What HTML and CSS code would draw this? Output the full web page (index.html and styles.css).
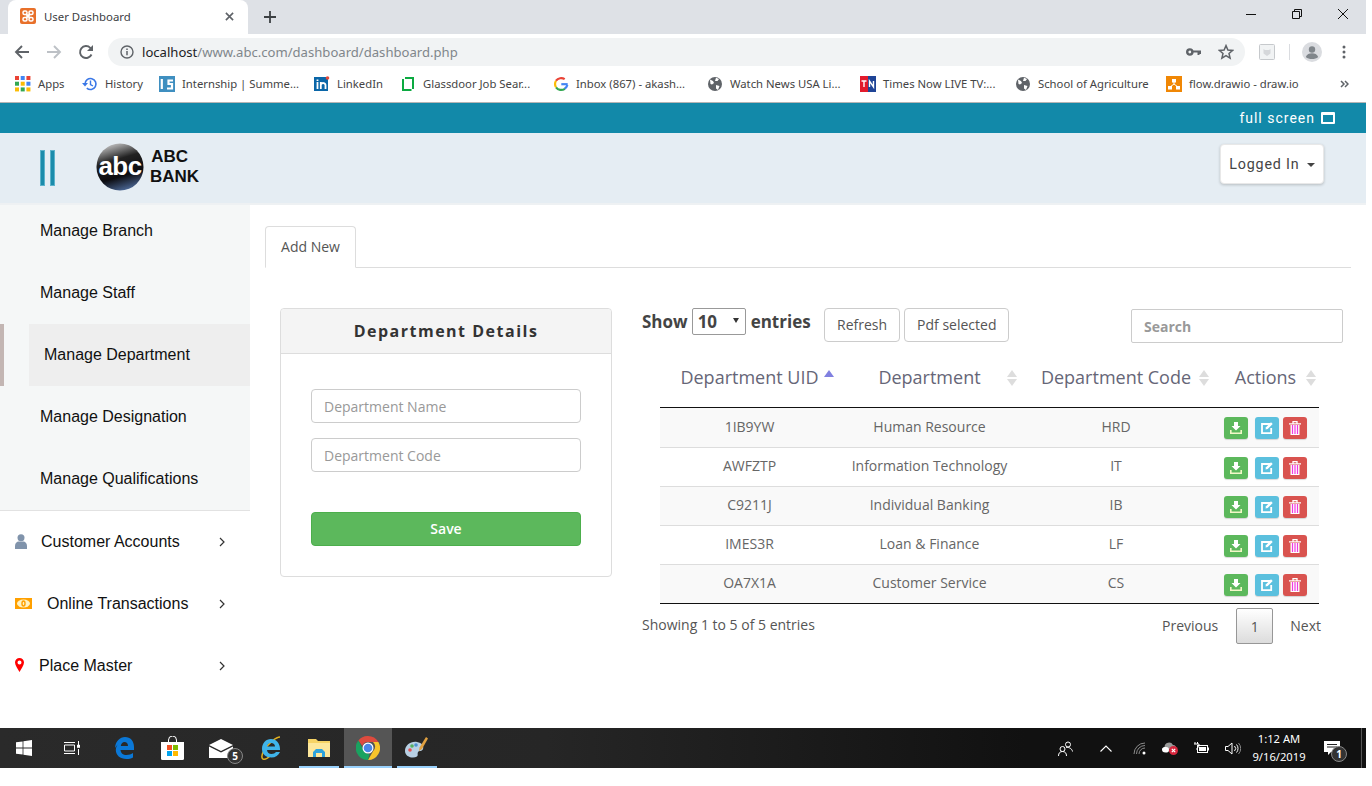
FILE: index.html
```html
<!DOCTYPE html>
<html lang="en">
<head>
    <meta charset="UTF-8">
    <meta name="viewport" content="width=device-width, initial-scale=1.0">
    <title>User Dashboard</title>
    <link rel="stylesheet" href="styles.css">
</head>
<body>
<div class="screen">

    <!-- browser chrome -->
    <div class="tabstrip">
        <div class="tab">
            <svg class="favicon" viewBox="0 0 16 16"><rect width="16" height="16" rx="2" fill="#e8702a"/><path d="M6 6l4 4M10 6l-4 4" stroke="#fff" stroke-width="2"/><rect x="3" y="3" width="4" height="3.500" rx="1.500" fill="none" stroke="#fff" stroke-width="1.500"/><rect x="9" y="3" width="4" height="3.500" rx="1.500" fill="none" stroke="#fff" stroke-width="1.500"/><rect x="3" y="9.500" width="4" height="3.500" rx="1.500" fill="none" stroke="#fff" stroke-width="1.500"/><rect x="9" y="9.500" width="4" height="3.500" rx="1.500" fill="none" stroke="#fff" stroke-width="1.500"/></svg>
            <span class="tab-title">User Dashboard</span>
            <svg class="tab-close" viewBox="0 0 10 10"><path d="M1 1l8 8M9 1l-8 8" stroke="#5f6368" stroke-width="1.800"/></svg>
        </div>
        <svg class="tab-new" viewBox="0 0 12 12"><path d="M6 0v12M0 6h12" stroke="#3c4043" stroke-width="1.800"/></svg>
        <div class="win-controls">
            <svg viewBox="0 0 12 12"><path d="M1 6.500h10" stroke="#111" stroke-width="1"/></svg>
            <svg viewBox="0 0 12 12"><path d="M1.500 3.500h7v7h-7zM3.500 3.500v-2h7v7h-2" fill="none" stroke="#111" stroke-width="1"/></svg>
            <svg viewBox="0 0 12 12"><path d="M1 1l10 10M11 1L1 11" stroke="#111" stroke-width="1"/></svg>
        </div>
    </div>
    <div class="toolbar">
        <svg class="nav-icon" viewBox="0 0 16 16"><path d="M15 8H2M8 2L2 8l6 6" fill="none" stroke="#5f6368" stroke-width="1.900"/></svg>
        <svg class="nav-icon" viewBox="0 0 16 16"><path d="M1 8h13M8 2l6 6-6 6" fill="none" stroke="#bdc1c6" stroke-width="1.900"/></svg>
        <svg class="nav-icon" viewBox="0 0 16 16"><path d="M13.500 10.500A6 6 0 1 1 12.300 3.800L14 5.500" fill="none" stroke="#5f6368" stroke-width="1.900"/><path d="M15 1v6H9z" fill="#5f6368"/></svg>
        <div class="omnibox">
            <svg class="info-icon" viewBox="0 0 14 14"><circle cx="7" cy="7" r="6" fill="none" stroke="#5f6368" stroke-width="1.400"/><path d="M7 6v4.200M7 3.400v1.500" stroke="#5f6368" stroke-width="1.500"/></svg>
            <span class="url"><span class="url-host">localhost</span>/www.abc.com/dashboard/dashboard.php</span>
            <svg class="key-icon" viewBox="0 0 15 8"><circle cx="3.800" cy="4" r="2.600" fill="none" stroke="#5f6368" stroke-width="2.400"/><path d="M6 3.500h9v1.500M12.500 3.500V7M14.300 3.500V6" fill="none" stroke="#5f6368" stroke-width="2"/></svg>
            <svg class="star-icon" viewBox="0 0 16 16"><path d="M8 1.600l1.900 4.400 4.700.4-3.600 3.100 1.100 4.600L8 11.700l-4.100 2.400L5 9.500 1.400 6.400l4.700-.4z" fill="none" stroke="#5f6368" stroke-width="1.500"/></svg>
        </div>
        <svg class="ext-icon" viewBox="0 0 16 16"><rect x=".5" y=".5" width="15" height="15" rx="1" fill="#f1f3f4" stroke="#c6c9cc"/><path d="M4.500 5l1.500 1h4l1.500-1v4.500L8 12 4.500 9.500z" fill="#d5d7da"/></svg>
        <span class="toolbar-sep"></span>
        <svg class="avatar" viewBox="0 0 20 20"><circle cx="10" cy="10" r="10" fill="#dadce0"/><circle cx="10" cy="7.500" r="3.200" fill="#80868b"/><path d="M3.800 15c1-3 3.500-3.800 6.200-3.800s5.200.8 6.200 3.800c-3 2.800-9.400 2.800-12.400 0z" fill="#80868b"/></svg>
        <svg class="menu-dots" viewBox="0 0 4 14"><circle cx="2" cy="2" r="1.500" fill="#5f6368"/><circle cx="2" cy="7" r="1.500" fill="#5f6368"/><circle cx="2" cy="12" r="1.500" fill="#5f6368"/></svg>
    </div>
    <div class="bookmarks">
        <div class="bm">
            <svg class="bm-icon" viewBox="0 0 14 14"><rect width="3.500" height="3.500" fill="#ea4335"/><rect x="5" width="3.500" height="3.500" fill="#4285f4"/><rect x="10" width="3.500" height="3.500" fill="#ea4335"/><rect y="5" width="3.500" height="3.500" fill="#34a853"/><rect x="5" y="5" width="3.500" height="3.500" fill="#fbbc05"/><rect x="10" y="5" width="3.500" height="3.500" fill="#4285f4"/><rect y="10" width="3.500" height="3.500" fill="#fbbc05"/><rect x="5" y="10" width="3.500" height="3.500" fill="#34a853"/><rect x="10" y="10" width="3.500" height="3.500" fill="#fbbc05"/></svg>
            <span>Apps</span>
        </div>
        <div class="bm">
            <svg class="bm-icon" viewBox="0 0 16 16"><path d="M3 8a5.500 5.500 0 1 1 1.800 4.100" fill="none" stroke="#3b78e7" stroke-width="1.600"/><path d="M0 7h6L3 10.500z" fill="#3b78e7"/><path d="M8.500 4.500v4l2.500 1.500" fill="none" stroke="#3b78e7" stroke-width="1.400"/></svg>
            <span>History</span>
        </div>
        <div class="bm">
            <svg class="bm-icon" viewBox="0 0 16 16"><rect width="16" height="16" fill="#3f8fc0"/><path d="M2.800 3v10M14 4.500H9.500v3.500H13v4.500H8" fill="none" stroke="#fff" stroke-width="2.200"/></svg>
            <span>Internship | Summe...</span>
        </div>
        <div class="bm">
            <svg class="bm-icon" viewBox="0 0 16 16"><rect y="1" width="14" height="14" fill="#0a66a8"/><circle cx="13.500" cy="2" r="1.800" fill="#e34a3a"/><path d="M3.500 6v7M3.500 3.500v1.500M6.800 13V6M6.800 8.500c1-2 4.700-2.200 4.700.8V13" fill="none" stroke="#fff" stroke-width="1.800"/></svg>
            <span>LinkedIn</span>
        </div>
        <div class="bm">
            <svg class="bm-icon" viewBox="0 0 16 16"><path d="M3 3v11h8.500M13 13V2H5" fill="none" stroke="#0caa41" stroke-width="2"/></svg>
            <span>Glassdoor Job Sear...</span>
        </div>
        <div class="bm">
            <svg class="bm-icon" viewBox="0 0 16 16"><path d="M14.700 8.200H8.300" stroke="#4285f4" stroke-width="2.200"/><path d="M14.400 9a6.500 6.500 0 0 1-3 3.900" fill="none" stroke="#4285f4" stroke-width="2.200"/><path d="M11.800 12.800A6.500 6.500 0 0 1 3 11.300" fill="none" stroke="#34a853" stroke-width="2.200"/><path d="M3 11.300a6.500 6.500 0 0 1 0-6.600" fill="none" stroke="#fbbc05" stroke-width="2.200"/><path d="M3 4.700a6.500 6.500 0 0 1 8.700-1.500" fill="none" stroke="#ea4335" stroke-width="2.200"/></svg>
            <span>Inbox (867) - akash...</span>
        </div>
        <div class="bm">
            <svg class="bm-icon" viewBox="0 0 16 16"><circle cx="8" cy="8" r="7" fill="#5f6368"/><path d="M3 3.500l3 1.500 1 2-2 1.500L3.500 8zM9 1.800l3 1.200-1.500 2H8zM9 9l3.500 1L11 14 9 12.500z" fill="#fff"/></svg>
            <span>Watch News USA Li...</span>
        </div>
        <div class="bm">
            <svg class="bm-icon" viewBox="0 0 16 16"><rect width="8" height="16" fill="#e21b2c"/><rect x="8" width="8" height="16" fill="#1f4496"/><path d="M1.500 5h5M4 5v6M9.500 11V5l4 6V5" fill="none" stroke="#fff" stroke-width="1.400"/></svg>
            <span>Times Now LIVE TV:...</span>
        </div>
        <div class="bm">
            <svg class="bm-icon" viewBox="0 0 16 16"><circle cx="8" cy="8" r="7" fill="#5f6368"/><path d="M3 3.500l3 1.500 1 2-2 1.500L3.500 8zM9 1.800l3 1.200-1.500 2H8zM9 9l3.500 1L11 14 9 12.500z" fill="#fff"/></svg>
            <span>School of Agriculture</span>
        </div>
        <div class="bm">
            <svg class="bm-icon" viewBox="0 0 16 16"><rect width="16" height="16" fill="#f08705"/><path d="M8 5v3M8 8l-4 3M8 8l4 3" stroke="#fff"/><rect x="6" y="3" width="4" height="3.500" fill="#fff"/><rect x="2" y="10" width="4" height="3.500" fill="#fff"/><rect x="10" y="10" width="4" height="3.500" fill="#fff"/></svg>
            <span>flow.drawio - draw.io</span>
        </div>
        <svg class="bm-more" viewBox="0 0 9 8"><path d="M1 1l3 3-3 3M5 1l3 3-3 3" fill="none" stroke="#5f6368" stroke-width="1.500"/></svg>
    </div>

    <!-- page -->
    <div class="topbar">
        <span>full screen</span>
        <svg class="fs-icon" viewBox="0 0 14 12"><rect width="14" height="12" rx="1" fill="#fff"/><rect x="2" y="3" width="10" height="7" fill="#1289a9"/></svg>
    </div>
    <header class="header">
        <div class="hamburger"><span></span><span></span></div>
        <svg class="logo" viewBox="0 0 50 50">
            <defs>
                <linearGradient id="abcShade" x1="0.300" y1="0" x2="0.600" y2="1">
                    <stop offset="0" stop-color="#c4c4c4"/>
                    <stop offset="0.350" stop-color="#222"/>
                    <stop offset="0.700" stop-color="#0c0c10"/>
                    <stop offset="1" stop-color="#4a6694"/>
                </linearGradient>
            </defs>
            <circle cx="25" cy="25" r="24.500" fill="url(#abcShade)"/>
            <text class="logo-abc" x="25" y="33" text-anchor="middle">abc</text>
        </svg>
        <div class="brand">
            <span class="brand-abc">ABC</span>
            <span>BANK</span>
        </div>
        <button class="logged-btn">Logged In <i class="caret"></i></button>
    </header>

    <div class="main">
        <aside class="sidebar">
            <ul class="submenu">
                <li>Manage Branch</li>
                <li>Manage Staff</li>
                <li class="active"><span>Manage Department</span></li>
                <li>Manage Designation</li>
                <li>Manage Qualifications</li>
            </ul>
            <div class="side-item">
                <svg class="side-icon" viewBox="0 0 12 15"><circle cx="6" cy="3.800" r="3.500" fill="#8093ab"/><path d="M0 15v-3c0-3 2-4.500 3.500-4.500h5C10 7.500 12 9 12 12v3z" fill="#8093ab"/></svg>
                <span class="side-label">Customer Accounts</span>
                <svg class="chev" viewBox="0 0 6 10"><path d="M1 1l4 4-4 4" fill="none" stroke="#333" stroke-width="1.200"/></svg>
            </div>
            <div class="side-item money">
                <svg class="side-icon" viewBox="0 0 17 11"><rect width="17" height="11" fill="#ffa000"/><ellipse cx="8.500" cy="5.500" rx="6.500" ry="4" fill="#fff3c4"/><ellipse cx="8.500" cy="5.500" rx="2.200" ry="3.200" fill="#ffa000"/><ellipse cx="8.500" cy="5.500" rx=".8" ry="1.800" fill="#fff3c4"/></svg>
                <span class="side-label">Online Transactions</span>
                <svg class="chev" viewBox="0 0 6 10"><path d="M1 1l4 4-4 4" fill="none" stroke="#333" stroke-width="1.200"/></svg>
            </div>
            <div class="side-item pin">
                <svg class="side-icon" viewBox="0 0 9 14"><path d="M4.500 0A4.500 4.500 0 0 0 0 4.500C0 7.500 3 11 4.500 14 6 11 9 7.500 9 4.500A4.500 4.500 0 0 0 4.500 0zm0 2.500a2 2 0 1 1 0 4 2 2 0 0 1 0-4z" fill="#f00"/></svg>
                <span class="side-label">Place Master</span>
                <svg class="chev" viewBox="0 0 6 10"><path d="M1 1l4 4-4 4" fill="none" stroke="#333" stroke-width="1.200"/></svg>
            </div>
        </aside>

        <section class="content">
            <div class="tabs"><a class="tabs-item">Add New</a></div>
            <div class="columns">
                <div class="card">
                    <div class="card-head">Department Details</div>
                    <div class="card-body">
                        <input class="field" type="text" placeholder="Department Name">
                        <input class="field" type="text" placeholder="Department Code">
                        <button class="save-btn">Save</button>
                    </div>
                </div>

                <div class="table-area">
                    <div class="table-tools">
                        <label class="length">Show <span class="fake-select">10<i></i></span> entries</label>
                        <button class="tool-btn">Refresh</button>
                        <button class="tool-btn">Pdf selected</button>
                        <input class="search" type="text" placeholder="Search">
                    </div>
                    <table class="dept-table">
                        <thead>
                            <tr>
                                <th class="col-uid sorted">Department UID</th>
                                <th class="col-name">Department</th>
                                <th class="col-code">Department Code</th>
                                <th class="col-actions">Actions</th>
                            </tr>
                        </thead>
                        <tbody id="rows"></tbody>
                    </table>
                    <div class="table-foot">
                        <span>Showing 1 to 5 of 5 entries</span>
                        <div class="pager">
                            <span>Previous</span>
                            <span class="page-current">1</span>
                            <span>Next</span>
                        </div>
                    </div>
                </div>
            </div>
        </section>
    </div>

    <!-- windows taskbar -->
    <footer class="taskbar">
        <div class="task-cell">
            <svg class="tb-win" viewBox="0 0 16 16"><path d="M0 2.300l6.600-.9v6.200H0zM7.400 1.300L16 0v7.600H7.400zM0 8.400h6.600v6.200L0 13.700zM7.400 8.400H16V16l-8.600-1.200z" fill="#fff"/></svg>
        </div>
        <div class="task-cell">
            <svg class="tb-view" viewBox="0 0 16 14"><path d="M.5 4h10v6H.5zM0 1.500h11M0 12.500h11M14.500 0v5M14.500 8v6" fill="none" stroke="#fff"/><rect x="13" y="3.800" width="3" height="3" fill="#fff"/></svg>
        </div>
        <div class="task-cell gap-left">
            <svg class="tb-edge" viewBox="0 0 20 22"><path d="M1 11C1.500 4 6 0 11 0c5.500 0 9 4 9 10v3H6.500c.3 3 2.500 5 6 5 2.500 0 5-.8 6.500-2v4.500c-2 1-4 1.500-6.500 1.500C6 22 1.800 18 1.800 13c0-3 1.500-5.500 3.500-7-1.500 1-3 3-4.300 5zM6.800 9H14c0-2.500-1.500-4-3.500-4-2 0-3.500 1.700-3.700 4z" fill="#0b78d7"/></svg>
        </div>
        <div class="task-cell">
            <svg class="tb-store" viewBox="0 0 23 24"><path d="M7.500 6V4a4 4 0 0 1 8 0v2" fill="none" stroke="#fff"/><path d="M0 6h23v16.500a1.500 1.500 0 0 1-1.500 1.500h-20A1.500 1.500 0 0 1 0 22.500z" fill="#fff"/><rect x="6" y="9" width="5" height="5" fill="#f25022"/><rect x="12" y="9" width="5" height="5" fill="#7fba00"/><rect x="6" y="15" width="5" height="5" fill="#00a4ef"/><rect x="12" y="15" width="5" height="5" fill="#ffb900"/></svg>
        </div>
        <div class="task-cell mail">
            <svg class="tb-mail" viewBox="0 0 24 19"><path d="M0 6l12-6 12 6-12 6z" fill="#fff"/><path d="M0 7.500l12 6 12-6V19H0z" fill="#fff"/></svg>
            <span class="tb-badge mail-badge">5</span>
        </div>
        <div class="task-cell ie">
            <svg class="tb-ie" viewBox="0 0 22 24"><path d="M20 1c-4 0-11 6-16 13C2 18 1 22 3 23c2 .8 5-1 7-3" fill="none" stroke="#e0b020" stroke-width="1.500"/><path d="M2 13C2 7 6 3 11 3s9 4 9 10v1H7c.3 2.500 2 4 4.500 4 2 0 3.500-1 4.500-2h4c-1.500 3.500-4.500 5.500-8.500 5.500C6 21.500 2 18 2 13zm5-2.500h8C15 8.500 13.500 7 11 7s-3.700 1.500-4 3.500z" fill="#3fb4ea"/></svg>
        </div>
        <div class="task-cell running">
            <svg class="tb-folder" viewBox="0 0 22 18"><path d="M0 0h8l2 2h12v16H0z" fill="#f6d365"/><path d="M0 4h22v14H0z" fill="#fde79b"/><path d="M5 18v-5l3-3h6l3 3v5h-3v-4H8v4z" fill="#2da3dd"/></svg>
        </div>
        <div class="task-cell running current">
            <svg class="tb-chrome" viewBox="0 0 24 24"><path d="M12 0a12 12 0 0 1 10.400 6H12a6 6 0 0 0-5.700 4L2.400 4.500A12 12 0 0 1 12 0z" fill="#dd4b3e"/><path d="M22.400 6A12 12 0 0 1 12 24l5.200-9a6 6 0 0 0-.2-9z" fill="#f7c52b"/><path d="M12 24A12 12 0 0 1 2.400 4.500L7 13a6 6 0 0 0 6.500 4.800z" fill="#1aa260"/><circle cx="12" cy="12" r="5.500" fill="#fff"/><circle cx="12" cy="12" r="4.300" fill="#4a86e8"/></svg>
        </div>
        <div class="task-cell running paint">
            <svg class="tb-paint" viewBox="0 0 24 24"><path d="M0 15C0 9 6 5 12 6c5 .8 7 4 6 7-.8 2.500-4 1.500-5 3s.5 3-1 4.500C8 23 0 21 0 15z" fill="#b8d0e4"/><circle cx="5" cy="14" r="1.800" fill="#e65050"/><circle cx="7" cy="10" r="1.800" fill="#55b060"/><circle cx="11" cy="9" r="1.800" fill="#4a90d0"/><path d="M21 1l2 1.500L17 13l-3 2 .5-3.500z" fill="#e0a040"/></svg>
        </div>
        <div class="tray">
            <svg class="tray-people" viewBox="0 0 15 15"><circle cx="10" cy="3.500" r="2.500" fill="none" stroke="#fff"/><circle cx="4.500" cy="8" r="2.500" fill="none" stroke="#fff"/><path d="M.5 15c0-3 1.500-4.500 4-4.500s4 1.500 4 4.500M8 6.500c2-.5 6 .5 6.500 4" fill="none" stroke="#fff"/></svg>
            <svg class="tray-up" viewBox="0 0 12 7"><path d="M.5 6.500L6 1l5.500 5.500" fill="none" stroke="#fff" stroke-width="1.100"/></svg>
            <svg class="tray-wifi" viewBox="0 0 13 13"><path d="M1 12a11 11 0 0 1 11-11M3.500 12A8.500 8.500 0 0 1 12 3.500M6 12a6 6 0 0 1 6-6" fill="none" stroke="#8a8a8a"/><circle cx="11" cy="11" r="1.500" fill="#fff"/></svg>
            <svg class="tray-cloud" viewBox="0 0 17 14"><path d="M1 9a3 3 0 0 1 2.500-3A4.500 4.500 0 0 1 12 4a3 3 0 0 1 3 4H3.500c-1 0-2 1-2.500 1z" fill="#9a9a9a"/><path d="M1 8.500C1 6.500 3 6 5 6s3 1 3 3-1 2.500-3.500 2.500S1 10.500 1 8.500z" fill="#fff"/><circle cx="12.500" cy="9.500" r="4.500" fill="#d7263d"/><path d="M10.800 7.800l3.400 3.400M14.200 7.800l-3.400 3.400" stroke="#fff" stroke-width="1.200"/></svg>
            <svg class="tray-batt" viewBox="0 0 16 12"><path d="M2 0v2M4.500 0v2M1 2h5v2.500L4 6v2" fill="none" stroke="#fff"/><rect x="4.500" y="3.500" width="10" height="7" fill="none" stroke="#fff"/><rect x="6" y="5" width="7" height="4" fill="#fff"/><rect x="15" y="5.500" width="1" height="3" fill="#fff"/></svg>
            <svg class="tray-vol" viewBox="0 0 16 13"><path d="M.5 4.500h2.500L7 1v11L3 8.500H.5z" fill="none" stroke="#fff"/><path d="M9.500 4a3.500 3.500 0 0 1 0 5M11.500 2.500a6 6 0 0 1 0 8" fill="none" stroke="#fff"/><path d="M13.500 1a8 8 0 0 1 0 11" fill="none" stroke="#888"/></svg>
            <div class="clock"><span>1:12 AM</span><span>9/16/2019</span></div>
            <div class="notif">
                <svg class="tray-notif" viewBox="0 0 16 15"><path d="M0 0h16v11H7l-3 3v-3H0z" fill="#fff"/><path d="M3 3.500h10M3 6h10" stroke="#222"/></svg>
                <span class="tb-badge notif-badge">1</span>
            </div>
            <span class="show-desktop"></span>
        </div>
    </footer>
</div>
<script>
    // department rows, normally from the server
    const departments = [
        ["1IB9YW", "Human Resource", "HRD"],
        ["AWFZTP", "Information Technology", "IT"],
        ["C9211J", "Individual Banking", "IB"],
        ["IMES3R", "Loan & Finance", "LF"],
        ["OA7X1A", "Customer Service", "CS"]
    ];
    const actionIcons = `
        <div class="actions">
            <span class="act act-green"><svg viewBox="0 0 12 12"><path d="M4 0h4v4h2.500L6 8.500 1.500 4H4z" fill="#fff"/><path d="M.8 8v3.200h10.400V8" fill="none" stroke="#f3f7c8" stroke-width="1.600"/></svg></span>
            <span class="act act-blue"><svg viewBox="0 0 12 12"><path d="M9 2H1v9.200h9.200V6" fill="none" stroke="#fff" stroke-width="1.800"/><path d="M4.500 7.500l.5-2.200L10 .3 11.700 2l-5 5z" fill="#fff"/></svg></span>
            <span class="act act-red"><svg class="trash" viewBox="0 0 12 14"><path d="M0 2.800h12M4 2.800V.7h4v2.100" fill="none" stroke="#fff" stroke-width="1.300"/><rect x="1.500" y="4" width="9" height="10" fill="#fff"/><path d="M3.500 4v9M6 4v9M8.500 4v9" stroke="#f03ce0" stroke-width="1.200"/></svg></span>
        </div>`;
    document.getElementById("rows").innerHTML = departments.map(d =>
        `<tr><td>${d[0]}</td><td>${d[1].replace("&", "&amp;")}</td><td>${d[2]}</td><td>${actionIcons}</td></tr>`
    ).join("");
</script>
</body>
</html>
```

FILE: styles.css
```css
* {
    box-sizing: border-box;
}
body {
    margin: 0;
    background-color: #fff;
    font-family: "Open Sans", sans-serif;
    color: #555;
}
svg {
    display: block;
    flex: none;
}
.screen {
    width: 1366px;
    height: 768px;
    display: flex;
    flex-direction: column;
    overflow: hidden;
}

/* browser chrome */
.tabstrip {
    height: 34px;
    background-color: #dee1e6;
    display: flex;
    align-items: center;
    padding-left: 8px;
}
.tab {
    width: 240px;
    height: 34px;
    background-color: #fff;
    border-radius: 8px 8px 0 0;
    display: flex;
    align-items: center;
    padding: 0 14px 2px 12px;
    font: 11.400px "Noto Sans", sans-serif;
    color: #3c4043;
}
.favicon {
    width: 16px;
    height: 16px;
}
.tab-title {
    margin-left: 8px;
    flex: 1;
}
.tab-close {
    width: 9px;
    height: 9px;
}
.tab-new {
    width: 12px;
    height: 12px;
    margin-left: 16px;
}
.win-controls {
    margin-left: auto;
    margin-bottom: 6px;
    display: flex;
    gap: 34px;
    padding-right: 17px;
}
.win-controls svg {
    width: 12px;
    height: 12px;
}
.toolbar {
    height: 32px;
    background-color: #fff;
    display: flex;
    align-items: flex-end;
    padding-left: 14px;
}
.nav-icon {
    width: 16px;
    height: 16px;
    margin: 0 16px 6px 0;
}
.omnibox {
    width: 1137px;
    height: 28px;
    margin-left: -2px;
    border-radius: 14px;
    background-color: #f1f3f4;
    display: flex;
    align-items: center;
    padding: 0 11px 0 12px;
}
.info-icon {
    width: 14px;
    height: 14px;
}
.url {
    margin-left: 8px;
    flex: 1;
    font: 13.100px "Noto Sans", sans-serif;
    color: #80868b;
}
.url-host {
    color: #202124;
}
.key-icon {
    width: 15px;
    height: 8px;
}
.star-icon {
    width: 16px;
    height: 16px;
    margin-left: 17px;
}
.ext-icon {
    width: 16px;
    height: 16px;
    margin: 0 0 6px 14px;
}
.toolbar-sep {
    width: 1px;
    height: 16px;
    background-color: #dadce0;
    margin: 0 12px 6px 14px;
}
.avatar {
    width: 20px;
    height: 20px;
    margin-bottom: 4px;
}
.menu-dots {
    width: 4px;
    height: 14px;
    margin: 0 0 7px 20px;
}
.bookmarks {
    height: 37px;
    background-color: #fff;
    border-bottom: 1px solid #b5b5b5;
    display: grid;
    grid-template-columns: 67px 77px 155px 86px 153px 154px 153px 155px 151px 174px 10px;
    align-items: center;
    padding-left: 15px;
    padding-bottom: 1px;
    font: 11.300px "Noto Sans", sans-serif;
    color: #444;
}
.bm {
    display: flex;
    align-items: center;
    gap: 7px;
    white-space: nowrap;
}
.bm-icon {
    width: 16px;
    height: 16px;
}
.bm-more {
    width: 9px;
    height: 8px;
}

/* page header */
.topbar {
    height: 30px;
    background-color: #1289a9;
    display: flex;
    justify-content: flex-end;
    align-items: center;
    gap: 6px;
    padding-right: 31px;
    font: 14px Roboto, sans-serif;
    letter-spacing: 1px;
    color: #fff;
}
.fs-icon {
    width: 14px;
    height: 12px;
}
.header {
    height: 72px;
    background-color: #e5edf3;
    border-bottom: 2px solid #eef1f3;
    display: flex;
    align-items: center;
    padding: 0 42px 0 40px;
    position: relative;
    z-index: 1;
}
.hamburger {
    display: flex;
    gap: 5px;
}
.hamburger span {
    width: 5px;
    height: 36px;
    background-color: #1b8cab;
    border: 1px solid #5db3cb;
}
.logo {
    width: 48px;
    height: 50px;
    margin: 0 0 2px 41px;
}
.logo-abc {
    font: bold 27px "Liberation Sans", sans-serif;
    fill: #fff;
    letter-spacing: -0.500px;
}
.brand {
    display: flex;
    flex-direction: column;
    align-items: center;
    margin: 0 0 2px 6px;
    font: bold 17px/20px "Liberation Sans", sans-serif;
    color: #111;
}
.brand-abc {
    margin-right: 10px;
}
.logged-btn {
    margin: 0 0 8px auto;
    width: 104px;
    height: 40px;
    border: 1px solid #e8e8e8;
    border-radius: 4px;
    background-color: #fff;
    box-shadow: 0 1px 3px rgba(0, 0, 0, 0.2);
    font: 14.300px Roboto, sans-serif;
    letter-spacing: 0.800px;
    color: #444;
    padding: 0;
}
.caret {
    display: inline-block;
    margin-left: 3px;
    vertical-align: middle;
    border-top: 4px solid #444;
    border-left: 4px solid transparent;
    border-right: 4px solid transparent;
}

/* layout */
.main {
    height: 523px;
    display: flex;
}
.sidebar {
    width: 250px;
    flex: none;
    font: 16px "Liberation Sans", sans-serif;
    color: #111;
}
.submenu {
    list-style: none;
    margin: -5px 0 0;
    padding: 0;
    background-color: #f5f7f7;
    border-bottom: 1px solid #e2e2e2;
}
.submenu li {
    height: 62px;
    line-height: 61px;
    padding-left: 40px;
}
.submenu li.active {
    padding-left: 0;
    border-left: 4px solid #c3b6b3;
}
.submenu li.active span {
    display: block;
    height: 62px;
    margin-left: 25px;
    padding-left: 15px;
    background-color: #eee;
}
.side-item {
    height: 62px;
    display: flex;
    align-items: center;
    padding: 0 25px 0 15px;
}
.side-icon {
    width: 12px;
    height: 15px;
    margin-bottom: 2px;
}
.side-label {
    margin-left: 14px;
    flex: 1;
}
.money .side-icon {
    width: 17px;
    height: 11px;
}
.money .side-label {
    margin-left: 15px;
}
.pin .side-icon {
    width: 9px;
    height: 14px;
}
.pin .side-label {
    margin-left: 15px;
}
.chev {
    width: 6px;
    height: 10px;
}

/* tab + card */
.content {
    flex: 1;
    padding: 21px 15px 0;
}
.tabs {
    height: 42px;
    border-bottom: 1px solid #ddd;
}
.tabs-item {
    display: block;
    width: 91px;
    height: 42px;
    background-color: #fff;
    border: 1px solid #ddd;
    border-bottom-color: #fff;
    border-radius: 4px 4px 0 0;
    text-align: center;
    font-size: 14px;
    line-height: 40px;
}
.columns {
    display: flex;
    padding: 40px 0 0 15px;
    margin-right: -7px;
}
.card {
    width: 332px;
    height: 269px;
    border: 1px solid #ddd;
    border-radius: 4px;
    flex: none;
}
.card-head {
    height: 45px;
    background-color: #f4f4f4;
    border-bottom: 1px solid #ddd;
    border-radius: 4px 4px 0 0;
    text-align: center;
    font-size: 16px;
    font-weight: 700;
    letter-spacing: 1.500px;
    line-height: 44px;
    color: #333;
}
.card-body {
    padding: 35px 30px;
    display: flex;
    flex-direction: column;
}
.field {
    height: 34px;
    margin-bottom: 15px;
    padding: 0 12px;
    border: 1px solid #ccc;
    border-radius: 4px;
    font: 14px "Open Sans", sans-serif;
}
.field::placeholder,
.search::placeholder {
    color: #999;
    opacity: 1;
}
.save-btn {
    height: 34px;
    margin-top: 25px;
    padding: 0 0 2px;
    border: 1px solid #4cae4c;
    border-radius: 4px;
    background-color: #5cb85c;
    color: #fff;
    font: 600 14px "Open Sans", sans-serif;
}

/* table */
.table-area {
    margin-left: 30px;
    width: 701px;
    flex: none;
}
.table-tools {
    height: 50px;
    display: flex;
    align-items: flex-start;
}
.length {
    width: 182px;
    font-size: 17px;
    font-weight: 700;
    color: #444;
    line-height: 28px;
    display: flex;
    gap: 5px;
}
.fake-select {
    width: 54px;
    height: 27px;
    margin-left: -1px;
    border: 1px solid #999;
    border-radius: 2px;
    padding-left: 5px;
    line-height: 25px;
    position: relative;
}
.fake-select i {
    position: absolute;
    right: 6px;
    top: 9px;
    border-top: 5px solid #333;
    border-left: 3px solid transparent;
    border-right: 3px solid transparent;
}
.tool-btn {
    height: 34px;
    margin-right: 4px;
    padding: 0 12px 2px;
    background-color: #fff;
    border: 1px solid #ccc;
    border-radius: 4px;
    font: 14px "Open Sans", sans-serif;
    color: #555;
}
.search {
    width: 212px;
    height: 34px;
    margin: 1px 0 0 auto;
    padding: 0 12px;
    border: 1px solid #ccc;
    border-radius: 2px;
    font: 700 14px "Open Sans", sans-serif;
}
.dept-table {
    width: 659px;
    margin-left: 18px;
    border-collapse: collapse;
    table-layout: fixed;
    font-size: 14px;
    text-align: center;
}
.col-uid { width: 179px; }
.col-name { width: 181px; }
.col-code { width: 192px; }
.col-actions { width: 107px; }
.dept-table th {
    height: 49px;
    font-size: 18px;
    font-weight: 400;
    color: #667;
    border-bottom: 1px solid #111;
    position: relative;
    white-space: nowrap;
    padding-bottom: 11px;
}
.dept-table th::before,
.dept-table th::after {
    content: "";
    position: absolute;
    right: 3px;
    border-left: 5px solid transparent;
    border-right: 5px solid transparent;
}
.dept-table th::before {
    top: 12px;
    border-bottom: 7px solid #ddd;
}
.dept-table th::after {
    top: 21px;
    border-top: 7px solid #ddd;
}
.dept-table th.sorted::before {
    top: 12px;
    right: 5px;
    border-bottom-color: #8080e0;
}
.dept-table th.sorted::after {
    display: none;
}
.dept-table td {
    height: 39px;
    border-top: 1px solid #ddd;
    padding: 0 0 2px;
    color: #666;
}
.dept-table tr:first-child td {
    height: 40px;
    border-top: 0;
}
.dept-table tbody tr:nth-child(odd) {
    background-color: #f9f9f9;
}
.dept-table tbody {
    border-bottom: 1px solid #111;
}
.actions {
    display: flex;
    justify-content: flex-end;
    padding: 4px 12px 0 0;
    gap: 4px;
}
.act {
    width: 24px;
    height: 22px;
    border-radius: 3px;
    display: flex;
    align-items: center;
    justify-content: center;
    box-shadow: 0 1px 1px rgba(0, 0, 0, 0.15);
}
.act svg {
    width: 12px;
    height: 12px;
}
.act svg.trash {
    height: 14px;
}
.act-green {
    margin-right: 3px;
    background-color: #5cb85c;
}
.act-blue {
    background-color: #5bc0de;
}
.act-red {
    background-color: #d9534f;
}
.table-foot {
    display: flex;
    justify-content: space-between;
    align-items: flex-start;
    padding: 4px 22px 0 0;
    font-size: 14px;
    line-height: 36px;
}
.table-foot > span {
    line-height: 34px;
}
.pager {
    display: flex;
    align-items: center;
    gap: 18px;
    line-height: 36px;
}
.page-current {
    width: 37px;
    height: 36px;
    margin-right: -1px;
    text-align: center;
    border: 1px solid #979797;
    border-radius: 2px;
    background: linear-gradient(#fff, #dcdcdc);
}

/* taskbar */
.taskbar {
    height: 40px;
    background: linear-gradient(90deg, #2a2a2a, #262626 40%, #111 75%);
    display: flex;
    align-items: stretch;
}
.task-cell {
    width: 48px;
    display: flex;
    align-items: center;
    justify-content: center;
    position: relative;
}
.gap-left {
    margin-left: 4px;
}
.running::after {
    content: "";
    position: absolute;
    left: 4px;
    right: 4px;
    bottom: 0;
    height: 2px;
    background-color: #99d1fc;
}
.current {
    margin-left: 1px;
    background-color: #555;
}
.current::after {
    left: 0;
    right: 0;
}
.paint {
    margin-left: 1px;
}
.mail {
    width: 51px;
}
.tb-win { width: 16px; height: 16px; }
.tb-view { width: 16px; height: 14px; }
.tb-edge { width: 20px; height: 22px; }
.tb-store { width: 23px; height: 24px; }
.tb-mail { width: 24px; height: 19px; margin-right: 2px; }
.tb-ie { width: 22px; height: 24px; }
.tb-folder { width: 22px; height: 18px; }
.tb-chrome { width: 24px; height: 24px; }
.tb-paint { width: 24px; height: 24px; }
.tb-badge {
    position: absolute;
    width: 16px;
    height: 16px;
    border: 1px solid #888;
    border-radius: 50%;
    background-color: #333;
    color: #fff;
    font: bold 10px/14px "Open Sans", sans-serif;
    text-align: center;
}
.mail-badge {
    right: 4px;
    bottom: 4px;
}
.tray {
    margin-left: auto;
    display: flex;
    align-items: center;
    color: #fff;
}
.tray-people { width: 15px; height: 15px; }
.tray-up { width: 12px; height: 7px; margin-left: 27px; }
.tray-wifi { width: 13px; height: 13px; margin-left: 21px; }
.tray-cloud { width: 17px; height: 14px; margin-left: 15px; }
.tray-batt { width: 16px; height: 12px; margin-left: 15px; }
.tray-vol { width: 16px; height: 13px; margin-left: 16px; }
.clock {
    width: 62px;
    margin-left: 7px;
    display: flex;
    flex-direction: column;
    align-items: center;
    font: 11.200px/18px "Noto Sans", sans-serif;
}
.notif {
    width: 24px;
    margin-left: 14px;
    position: relative;
}
.tray-notif { width: 16px; height: 15px; }
.notif-badge {
    left: 7px;
    top: 5px;
}
.show-desktop {
    align-self: stretch;
    width: 1px;
    margin: 0 4px 0 13px;
    background-color: #555;
}
```
